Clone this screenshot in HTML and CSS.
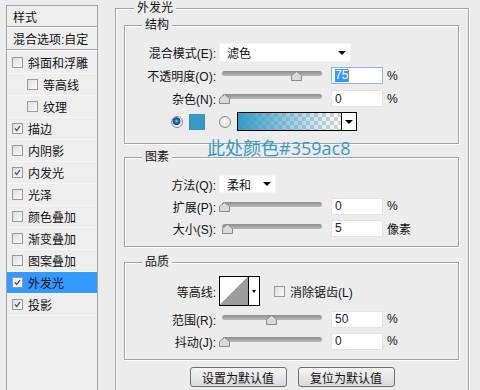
FILE: index.html
```html
<!DOCTYPE html>
<html lang="zh-CN">
<head>
    <meta charset="UTF-8">
    <title>图层样式 - 外发光</title>
    <link rel="stylesheet" href="styles.css">
</head>
<body>
    <div class="dialog">
        <div class="styles-panel">
            <div class="panel-head">样式</div>
            <div class="panel-blend">混合选项:自定</div>
            <ul class="style-list">
                <li><span class="check"></span>斜面和浮雕</li>
                <li class="sub"><span class="check"></span>等高线</li>
                <li class="sub"><span class="check"></span>纹理</li>
                <li><span class="check"><svg viewBox="0 0 11 11"><path d="M2.5 5.5 L4.5 8 L8.5 2.5"/></svg></span>描边</li>
                <li><span class="check"></span>内阴影</li>
                <li><span class="check"><svg viewBox="0 0 11 11"><path d="M2.5 5.5 L4.5 8 L8.5 2.5"/></svg></span>内发光</li>
                <li><span class="check"></span>光泽</li>
                <li><span class="check"></span>颜色叠加</li>
                <li><span class="check"></span>渐变叠加</li>
                <li><span class="check"></span>图案叠加</li>
                <li class="selected"><span class="check"><svg viewBox="0 0 11 11"><path d="M2.5 5.5 L4.5 8 L8.5 2.5"/></svg></span>外发光</li>
                <li><span class="check"><svg viewBox="0 0 11 11"><path d="M2.5 5.5 L4.5 8 L8.5 2.5"/></svg></span>投影</li>
            </ul>
        </div>

        <div class="group outer">
            <div class="legend outer-legend">外发光</div>
            <div class="note">此处颜色#359ac8</div>

            <!-- 结构 -->
            <div class="group struct">
                <div class="legend">结构</div>
                <div class="row">
                    <span class="label">混合模式(E):</span>
                    <div class="select blend-mode"><span>滤色</span><i class="caret"></i></div>
                </div>
                <div class="row">
                    <span class="label">不透明度(O):</span>
                    <div class="slider"><div class="track"></div><svg class="thumb" style="left:69px" viewBox="0 0 11 10"><polygon points="5.5,0.5 10.5,4.5 10.5,9.5 0.5,9.5 0.5,4.5"/></svg></div>
                    <div class="field focused"><span class="sel">75</span><span class="cursor"></span></div>
                    <span class="unit">%</span>
                </div>
                <div class="row">
                    <span class="label">杂色(N):</span>
                    <div class="slider"><div class="track"></div><svg class="thumb" style="left:-3px" viewBox="0 0 11 10"><polygon points="5.5,0.5 10.5,4.5 10.5,9.5 0.5,9.5 0.5,4.5"/></svg></div>
                    <div class="field">0</div>
                    <span class="unit">%</span>
                </div>
                <div class="row color-row">
                    <span class="radio on"></span>
                    <span class="swatch"></span>
                    <span class="radio"></span>
                    <div class="gradient-pick">
                        <div class="gradient"></div>
                        <div class="pick-arrow"><i class="caret"></i></div>
                    </div>
                </div>
            </div>

            <!-- 图素 -->
            <div class="group elements">
                <div class="legend">图素</div>
                <div class="row">
                    <span class="label">方法(Q):</span>
                    <div class="select technique"><span>柔和</span><i class="caret"></i></div>
                </div>
                <div class="row">
                    <span class="label">扩展(P):</span>
                    <div class="slider"><div class="track"></div><svg class="thumb" style="left:-3px" viewBox="0 0 11 10"><polygon points="5.5,0.5 10.5,4.5 10.5,9.5 0.5,9.5 0.5,4.5"/></svg></div>
                    <div class="field">0</div>
                    <span class="unit">%</span>
                </div>
                <div class="row">
                    <span class="label">大小(S):</span>
                    <div class="slider"><div class="track"></div><svg class="thumb" style="left:0px" viewBox="0 0 11 10"><polygon points="5.5,0.5 10.5,4.5 10.5,9.5 0.5,9.5 0.5,4.5"/></svg></div>
                    <div class="field">5</div>
                    <span class="unit">像素</span>
                </div>
            </div>

            <!-- 品质 -->
            <div class="group quality">
                <div class="legend">品质</div>
                <div class="row contour-row">
                    <span class="label">等高线:</span>
                    <div class="contour">
                        <div class="contour-graph"></div>
                        <div class="contour-arrow"><i class="caret small"></i></div>
                    </div>
                    <span class="check antialias"></span>
                    <span class="check-text">消除锯齿(L)</span>
                </div>
                <div class="row">
                    <span class="label">范围(R):</span>
                    <div class="slider"><div class="track"></div><svg class="thumb" style="left:44px" viewBox="0 0 11 10"><polygon points="5.5,0.5 10.5,4.5 10.5,9.5 0.5,9.5 0.5,4.5"/></svg></div>
                    <div class="field">50</div>
                    <span class="unit">%</span>
                </div>
                <div class="row">
                    <span class="label">抖动(J):</span>
                    <div class="slider"><div class="track"></div><svg class="thumb" style="left:-3px" viewBox="0 0 11 10"><polygon points="5.5,0.5 10.5,4.5 10.5,9.5 0.5,9.5 0.5,4.5"/></svg></div>
                    <div class="field">0</div>
                    <span class="unit">%</span>
                </div>
            </div>

            <div class="buttons">
                <button>设置为默认值</button>
                <button>复位为默认值</button>
            </div>
        </div>
    </div>
</body>
</html>
```

FILE: styles.css
```css
* {
    margin: 0;
    padding: 0;
    box-sizing: border-box;
}

body {
    width: 480px;
    height: 390px;
    overflow: hidden;
    background: #ececec;
    color: #111;
    font-family: 'Liberation Sans', 'Noto Sans CJK SC', sans-serif;
    font-size: 12px;
}

.dialog {
    display: flex;
    align-items: flex-start;
    padding: 5px 0 0 6px;
}

/* left list of styles */
.styles-panel {
    flex-shrink: 0;
    width: 92px;
    height: 385px;
    border: 1px solid #a3a3a3;
    border-bottom: 0;
    background: #eeeeee;
}

.panel-head {
    display: flex;
    align-items: center;
    height: 21px;
    padding-left: 6px;
    border-bottom: 1px solid #a3a3a3;
    box-shadow: 0 1px 0 #fff;
}

.panel-blend {
    display: flex;
    align-items: center;
    height: 22px;
    margin-top: 1px;
    padding-left: 6px;
    border-bottom: 1px solid #a3a3a3;
    box-shadow: 0 1px 0 #fff;
}

.style-list {
    list-style: none;
    margin-top: 2px;
}

.style-list li {
    display: flex;
    align-items: center;
    gap: 5px;
    height: 22px;
    padding-left: 5px;
    border-bottom: 1px solid #f7f7f7;
}

.style-list li.sub {
    padding-left: 20px;
}

.style-list li.selected {
    background: #3399ff;
}

.check {
    display: inline-block;
    flex-shrink: 0;
    width: 11px;
    height: 11px;
    border: 1px solid #9a9a9a;
    background: linear-gradient(135deg, #dedede, #fafafa);
}

.selected .check {
    background: linear-gradient(135deg, #e6e6e6, #fff);
}

.check svg {
    display: block;
    width: 9px;
    height: 9px;
}

.check svg path {
    fill: none;
    stroke: #2f4a9c;
    stroke-width: 1.6;
}

/* group boxes */
.group {
    position: relative;
    border: 1px solid #a3a3a3;
    box-shadow: 1px 1px 0 #fff, inset 1px 1px 0 #fff;
}

.legend {
    position: absolute;
    top: -9px;
    left: 17px;
    padding: 0 3px;
    background: #ececec;
    line-height: 16px;
}

.outer {
    flex-shrink: 0;
    width: 354px;
    height: 382px;
    margin: 3px 0 0 17px;
    padding-top: 16px;
    border-bottom: 0;
}

.outer-legend {
    left: 18px;
}

.outer .group {
    margin: 0 9px 0 8px;
}

.struct {
    padding: 15px 0 10px;
}

.elements {
    margin-top: 13px !important;
    padding: 15px 0 7px;
}

.quality {
    margin-top: 15px !important;
    padding: 11px 0 7px;
}

.note {
    position: absolute;
    top: 128px;
    left: 91px;
    z-index: 2;
    font-family: 'Open Sans', 'Noto Sans CJK SC', sans-serif;
    font-size: 18px;
    line-height: 22px;
    color: #359ac8;
}

/* rows */
.row {
    display: flex;
    align-items: center;
    height: 22px;
}

.struct .row {
    height: 23px;
}

.label {
    width: 91px;
    flex-shrink: 0;
    text-align: right;
}

.select {
    display: flex;
    align-items: center;
    justify-content: space-between;
    height: 19px;
    margin-left: 3px;
    padding: 0 4px 0 7px;
    background: #fff;
    border: 1px solid #f4f4f4;
}

.blend-mode {
    width: 132px;
}

.technique {
    width: 57px;
    height: 18px;
}

.caret {
    display: inline-block;
    width: 0;
    height: 0;
    border-left: 4px solid transparent;
    border-right: 4px solid transparent;
    border-top: 4px solid #000;
}

.caret.small {
    border-left-width: 2px;
    border-right-width: 2px;
    border-top-width: 3px;
}

.slider {
    position: relative;
    flex-shrink: 0;
    width: 100px;
    height: 100%;
    margin-left: 6px;
}

.track {
    position: absolute;
    top: 7px;
    left: 0;
    right: 0;
    height: 5px;
    border-radius: 3px;
    background: linear-gradient(#8e8e8e, #b9b9b9);
}

.thumb {
    position: absolute;
    top: 7px;
    width: 11px;
    height: 10px;
}

.thumb polygon {
    fill: #dadada;
    stroke: #8a8a8a;
    stroke-width: 1;
}

.field {
    display: flex;
    align-items: center;
    width: 52px;
    height: 17px;
    margin-left: 9px;
    padding-left: 3px;
    background: #fff;
    border: 1px solid #e3e3e3;
    color: #1b1b3a;
}

.field.focused {
    border-color: #8bb6e2;
}

.field .sel {
    background: #3399ff;
    color: #fff;
    line-height: 13px;
}

.field .cursor {
    width: 1px;
    height: 12px;
    background: #e07a1a;
}

.unit {
    margin-left: 4px;
}

/* colour row */
.color-row {
    padding-left: 46px;
}

.radio {
    flex-shrink: 0;
    width: 12px;
    height: 12px;
    border-radius: 50%;
    border: 1px solid #8c8c8c;
    background: radial-gradient(circle at 45% 40%, #fff, #d4d4d4);
}

.radio.on {
    background: radial-gradient(circle at 45% 42%, #9ad8ff 0, #1f86d6 1.5px, #0b3f86 3.5px, #dcdcdc 4.2px, #fff 6px);
}

.swatch {
    width: 16px;
    height: 16px;
    margin: 0 14px 0 6px;
    background: #359ac8;
    border: 1px solid #3b8fba;
}

.gradient-pick {
    display: flex;
    width: 120px;
    height: 19px;
    margin-left: 6px;
    border: 1px solid #000;
}

.gradient {
    flex: 1;
    background:
        linear-gradient(to right, #359ac8, rgba(53, 154, 200, 0)),
        conic-gradient(#d4d4d4 25%, #fff 0 50%, #d4d4d4 0 75%, #fff 0) 0 0 / 8px 8px;
}

.pick-arrow {
    display: flex;
    align-items: center;
    justify-content: center;
    width: 15px;
    border-left: 1px solid #000;
    background: #fff;
}

/* quality */
.contour-row {
    height: 34px !important;
}

.contour {
    display: flex;
    width: 41px;
    height: 30px;
    margin-left: 3px;
    border: 1px solid #000;
    background: #fff;
}

.contour-graph {
    width: 29px;
    border-right: 1px solid #000;
    background: linear-gradient(to top left, #9c9c9c 50%, #fff 50%);
}

.contour-arrow {
    display: flex;
    flex: 1;
    align-items: center;
    justify-content: center;
}

.antialias {
    margin-left: 14px;
}

.check-text {
    margin-left: 5px;
}

/* buttons */
.buttons {
    display: flex;
    justify-content: center;
    gap: 11px;
    margin-top: 7px;
}

button {
    width: 97px;
    height: 20px;
    border: 1px solid #6f6f6f;
    border-radius: 3px;
    background: linear-gradient(#f4f4f4, #d9d9d9);
    font-family: 'Liberation Sans', 'Noto Sans CJK SC', sans-serif;
    font-size: 12px;
    color: #111;
}
```
